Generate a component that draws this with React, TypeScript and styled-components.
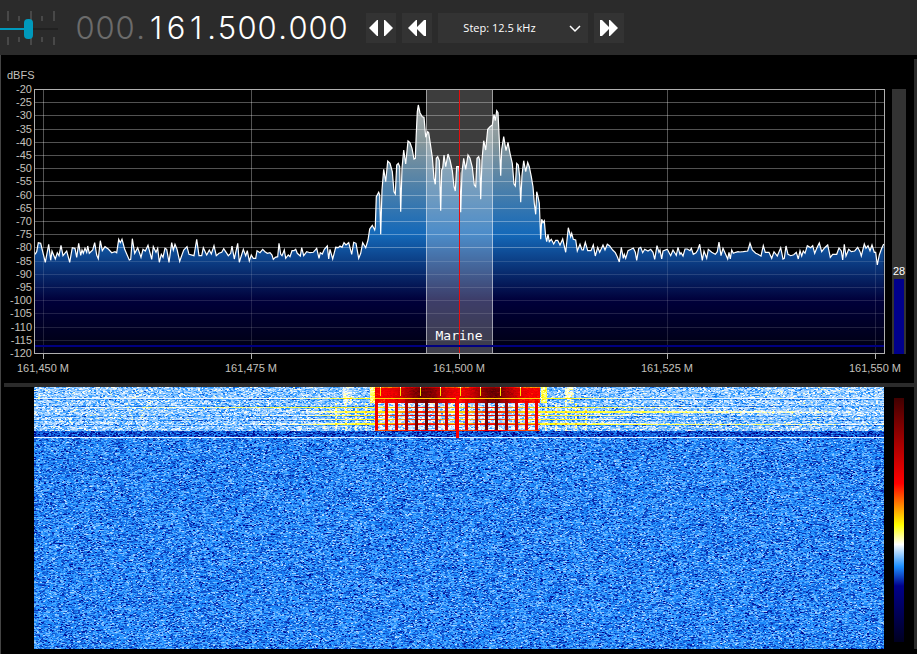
import React, { useLayoutEffect, useRef, useState } from 'react';
import styled, { createGlobalStyle } from 'styled-components';

const GlobalStyle = createGlobalStyle`
  * { box-sizing: border-box; }
  body { margin: 0; background: #000; font-family: "Liberation Sans", Arial, sans-serif; }
`;

const Page = styled.main`
  display: flex;
  flex-direction: column;
  background: #000;
`;

const Toolbar = styled.header`
  display: flex;
  align-items: center;
  height: 55px;
  background: #2b2b2b;
`;

const SliderBox = styled.label`
  display: grid;
  width: 58px;
  height: 55px;
  align-items: center;
  > * { grid-area: 1 / 1; }
`;

const VolumeSlider = styled.input`
  appearance: none;
  width: 58px;
  height: 20px;
  margin: 2px 0 0;
  background: transparent;
  &::-webkit-slider-runnable-track {
    height: 2px;
    background: linear-gradient(90deg, #0099bc 50%, #212121 50%);
  }
  &::-webkit-slider-thumb {
    appearance: none;
    width: 9px;
    height: 20px;
    margin-top: -9px;
    border-radius: 4px;
    background: #0099bc;
  }
`;

const Frequency = styled.output`
  display: flex;
  margin-left: 17px;
  color: #fff;
  font: 300 31px/55px Inter, "Open Sans", sans-serif;
`;

const Digit = styled.span<{ $dim?: boolean; $dot?: boolean }>`
  width: ${p => (p.$dot ? 11 : 20)}px;
  text-align: center;
  color: ${p => (p.$dim ? '#6b6b6b' : '#fff')};
`;

const Controls = styled.div`
  display: flex;
  gap: 6px;
  margin-left: 18px;
`;

const IconButton = styled.button`
  display: grid;
  place-items: center;
  width: 30px;
  height: 30px;
  padding: 0;
  border: 0;
  background: #333;
  svg { fill: #fff; }
`;

const SelectBox = styled.label`
  display: grid;
  grid-template-columns: 1fr 27px;
  align-items: center;
  width: 150px;
  height: 30px;
  background: #333;
  svg { grid-area: 1 / 2; pointer-events: none; }
`;

const StepSelect = styled.select`
  appearance: none;
  grid-area: 1 / 1 / 2 / 3;
  width: 100%;
  height: 30px;
  padding: 0 27px 0 0;
  border: 0;
  background: transparent;
  color: #fff;
  font: 11px "Open Sans", "Noto Sans", sans-serif;
  text-align: center;
  text-align-last: center;
`;

const Body = styled.section`
  display: flex;
  border-left: 1px solid #444;
  padding-bottom: 5px;
`;

const Content = styled.div`
  flex: 1;
  min-width: 0;
`;

const EdgeStrip = styled.div`
  width: 3px;
  margin-top: 4px;
  background: #2b2b2b;
`;

const Row = styled.div`
  display: flex;
  align-items: flex-start;
`;

const Spectrum = styled.svg`
  display: block;
  flex: 1;
  min-width: 0;
  overflow: visible;
  font-family: "Liberation Sans", Arial, sans-serif;
  font-size: 11px;
`;

const Level = styled.div`
  display: flex;
  flex-direction: column;
  align-items: center;
  justify-content: flex-end;
  width: 14px;
  height: 265px;
  margin: 34px 8px 0 7px;
  background: #333;
  color: #fff;
  font-size: 11px;
  line-height: 16px;
`;

const LevelFill = styled.div`
  width: 10px;
  height: 75px;
  background: #00008b;
`;

const Splitter = styled.div`
  height: 4px;
  margin-left: 3px;
  background: #2b2b2b;
`;

const Waterfall = styled.canvas`
  display: block;
  flex: 1;
  min-width: 0;
  height: 262px;
  margin-left: 33px;
`;

const ColorScale = styled.div`
  width: 10px;
  height: 244px;
  margin: 11px 10px 0;
  background: linear-gradient(#400000, #f00 35%, #ff0 52%, #fff 60%, #1e90ff 69%, #00008b 77%, #000020);
`;

// Trace segments: origin plus point offsets in thirds of a plot unit.
const SEGMENTS: [number, number, string][] = [
  [0, 60, '105,583 110,575 115,548 122,550 127,570 136,607 146,553 152,601 156,573 166,597 172,578 177,587 183,556 189,587 200,573 209,607 217,563 225,565 230,592 236,550 242,586 246,570 250,580 255,565 260,577 263,558 268,580 278,570 284,548 290,585 295,596 301,542 307,572 315,560 325,567 335,578 345,575 350,578 356,538 361,548 366,538 374,568 388,600 392,598 397,536 404,580 413,563 423,592 429,568 436,573 444,556 455,598 460,560 468,577 473,565 478,607 484,583 489,592 495,565 500,568 507,607 515,548 520,570 525,553 531,568 539,604 551,570 561,560 567,583 582,587 590,538 597,587 605,587 610,563 620,585 628,570 634,582 642,557 649,587 657,580 665,577 671,566 685,587 692,580 696,558 703,597 713,550 718,607 730,568'],
  [240, 230, '17,77 22,62 28,93 34,75 40,85 47,85 51,62 60,68 68,58 75,65 82,70 90,68 96,75 100,88 106,82 113,80 117,40 122,73 126,77 133,60 137,85 145,75 150,80 156,62 162,62 167,58 172,70 181,78 185,53 191,77 200,65 210,68 220,67 230,55 237,85 241,68 247,72 253,58 262,48 266,87 270,58 278,87 287,52 295,53'],
  [340, 80, '0,498 6,502 12,488 18,495 26,488 35,523 41,487 48,490 56,535 62,520 68,488 77,503 84,480 89,447 97,436 104,450 106,440 109,350 116,337 119,345 122,463 126,330 131,268 137,305 143,243 150,250 157,275 162,335 166,342 170,255 175,250 179,260 182,395 186,265 191,210 197,252 204,183 210,188 216,205 222,237 226,235 229,160 232,95 235,75 240,98 247,110 252,112 257,172 263,155 266,158 270,185 277,232 282,295 286,313 289,235 293,230 298,242 302,392 305,270 308,265 312,225 317,260 324,222 330,240 337,272 342,320 346,333 350,260 356,260 359,280 362,397 366,275 371,235 377,268 384,225 390,235 397,262 403,315 407,320 411,235 416,230 419,240 422,358 426,240 431,182 437,210 443,148 450,140 457,135 462,103 466,122 470,92 474,98 478,180 482,287 485,208 491,170 498,212 504,187 510,220 517,250 522,312 526,318 530,250 535,255 539,290 542,367 546,285 551,242 557,275 563,247 568,260 574,290 579,320 583,370 587,403 590,335 594,350 598,370 602,478 605,418 609,428 613,422 617,470 620,485 624,463 628,485 634,478 641,492 647,481 653,481'],
  [560, 220, '0,75 8,57 17,97 25,23 32,50 35,40 40,58 47,60 52,93 60,73 66,90 70,90 76,67 83,92 93,92 100,75 106,108 113,82 119,97 129,75 135,90 142,73 149,78 158,90 166,98 172,110 178,126 184,82 190,115 193,103 197,115 204,92 213,88 220,84 226,97 230,121 236,85 242,82 248,98 254,88 264,93 272,88 279,97 284,118 291,77 297,97 300,90 305,117 309,93 322,88 332,107 339,90 349,106 354,82 360,103 363,98 369,108 375,87 382,87 390,92 394,85 400,103 408,98 413,90 419,73 427,121 432,93 440,115 445,88 455,97 466,103 472,95 477,66 483,107 489,85 503,117 507,97 511,117 515,90 520,100 527,97 534,95'],
  [700, 220, '120,96 130,95 143,93 150,70 157,90 167,100 174,103 183,108 190,77 196,97 207,97 215,115 222,95 232,108 242,83 249,117 253,115 258,78 264,103 272,107 281,104 289,97 295,117 300,92 305,108 310,93 315,100 322,77 332,83 338,77 344,100 350,85 358,69 365,95 374,83 383,75 391,112 398,103 410,103 417,84 424,93 428,120 433,73 438,108 446,88 454,95 464,93 473,82 480,95 484,108 493,72 498,85 504,77 510,92 516,75 523,97 527,97 532,135 538,105 545,85 551,72'],
];

const TRACE = SEGMENTS.flatMap(([ox, oy, pts]) =>
  pts.split(' ').map(pt => {
    const [x, y] = pt.split(',').map(Number);
    return `${(ox + x / 3).toFixed(1)},${(oy + y / 3).toFixed(1)}`;
  }),
).join(' ');

const LEVELS = Array.from({ length: 21 }, (_, i) => -20 - i * 5);
const MARKS = ['161,450 M', '161,475 M', '161,500 M', '161,525 M', '161,550 M'];

function SpectrumChart() {
  return (
    <Spectrum viewBox="1 55 884 328" role="img" aria-label="Spectrum in dBFS">
      <defs>
        <linearGradient id="level" gradientUnits="userSpaceOnUse" x1="0" y1="89" x2="0" y2="353">
          <stop offset="0" stopColor="#b9b6b3" />
          <stop offset="0.2" stopColor="#85969a" />
          <stop offset="0.55" stopColor="#1469b9" />
          <stop offset="0.8" stopColor="#00003a" />
          <stop offset="1" stopColor="#000010" />
        </linearGradient>
      </defs>
      <polygon points={`34,353 ${TRACE} 884,353`} fill="url(#level)" />
      <rect x="426" y="90" width="67" height="263" fill="#fff" fillOpacity="0.24" />
      <g stroke="#fff" strokeOpacity="0.32" shapeRendering="crispEdges">
        {LEVELS.slice(1, 20).map((v, i) => {
          const y = Math.floor(89.5 + 13.2 * (i + 1)) + 0.5;
          return <line key={v} x1="35" x2="884" y1={y} y2={y} strokeOpacity={y > 260 ? 0.13 : 0.32} />;
        })}
        {MARKS.map((m, i) => (
          <React.Fragment key={m}>
            <line x1={43.5 + i * 208} x2={43.5 + i * 208} y1="90" y2="248" />
            <line x1={43.5 + i * 208} x2={43.5 + i * 208} y1="248" y2="353" strokeOpacity="0.13" />
          </React.Fragment>
        ))}
        <path d="M426.5 90V353M492.5 90V353" strokeOpacity="0.5" />
      </g>
      <polyline points={TRACE} fill="none" stroke="#fff" strokeWidth="1.2" />
      <text x="459" y="340" fill="#fff" textAnchor="middle" fontSize="13" fontFamily='"DejaVu Sans Mono", monospace'>Marine</text>
      <g shapeRendering="crispEdges">
        <rect x="459" y="90" width="1" height="263" fill="#e60c0c" />
        <rect x="35" y="345" width="849" height="2" fill="#000080" />
        <rect x="34.5" y="89.5" width="850" height="264" fill="none" stroke="#b0b0b0" />
        {MARKS.map((m, i) => <rect key={m} x={43 + i * 208} y="354" width="1" height="5" fill="#b0b0b0" />)}
      </g>
      <g fill="#c3c0bd">
        <text x="7" y="79">dBFS</text>
        {LEVELS.map((v, i) => <text key={v} x="32" y={Math.round(93 + i * 13.2)} textAnchor="end">{v}</text>)}
        {MARKS.map((m, i) => <text key={m} x={43 + i * 208} y="372" textAnchor="middle">{m}</text>)}
      </g>
    </Spectrum>
  );
}

const PALETTE: [number, number, number, number][] = [
  [0, 0, 0, 32], [0.23, 0, 0, 139], [0.31, 30, 144, 255], [0.4, 255, 255, 255],
  [0.48, 255, 255, 0], [0.65, 255, 0, 0], [1, 64, 0, 0],
];

function paletteColor(value: number) {
  const v = Math.max(0, Math.min(1, value));
  let i = 1;
  while (i < PALETTE.length - 1 && PALETTE[i][0] < v) i++;
  const a = PALETTE[i - 1];
  const b = PALETTE[i];
  const t = (v - a[0]) / (b[0] - a[0]);
  return [1, 2, 3].map(k => a[k] + (b[k] - a[k]) * t);
}

function drawWaterfall(ctx: CanvasRenderingContext2D) {
  const width = 850;
  const height = 262;
  const image = ctx.createImageData(width, height);
  let seed = 7411;
  const random = () => {
    seed = (Math.imul(seed, 1664525) + 1013904223) >>> 0;
    return seed / 4294967296;
  };
  // Rows in which the keyed signal splatters over the band: row -> [left reach, right reach].
  const splatter: Record<number, [number, number]> = {
    11: [90, 90], 20: [250, 160], 24: [70, 230], 25: [60, 260], 28: [90, 90], 32: [70, 70], 36: [60, 90], 37: [110, 330],
  };
  const quiet = [12, 19, 29, 33, 38];
  for (let y = 0; y < height; y++) {
    let held = 0;
    let run = 0;
    for (let x = 0; x < width; x++) {
      if (run <= 0) {
        held = (random() + random() + random() - 1.5) / 1.5;
        if (held < 0) held *= 1.25;
        run = random() < 0.65 ? 2 : 1;
      }
      run--;
      const side = x < 424 ? 0 : 1;
      const d = Math.abs(x - 424);
      const out = Math.max(0, d - 82);
      const inBand = x >= 341 && x <= 505;
      const peak = Math.exp(-(((d - 35) / 20) ** 2));
      const phase = (x - 341 + 1000) % 10;
      let v = 0.308 + held * 0.076;
      if (y < 44) {
        v = 0.354 + held * 0.075 + (d > 300 ? 0.006 : 0);
        if (quiet.includes(y)) v -= 0.035;
        const line = splatter[y];
        if (line) {
          const strength = Math.exp(-((out / line[side]) ** 2));
          v = v * (1 - strength) + (0.47 + held * 0.02) * strength;
        }
        if (y === 11) v = Math.max(v, 0.39);
        if (y < 16 && out > 0 && out < 7) v = 0.45 + held * 0.07;
        else if (y < 16 && out > 24 && out < 34) v += 0.045;
        if (y > 15 && out > 0 && out < 50 && phase < 2) v += 0.05;
        if (inBand && y < 16) {
          v = 0.67 + peak * 0.25 + held * 0.05;
          if (y < 9 && x % 20 === 6) v = 0.5;
          if (y > 11 && phase > 3) v -= 0.04;
          if (y === 11) v = 0.51;
          if (y === 0) v -= 0.1;
        } else if (inBand) {
          v = 0.375 + held * 0.07;
          if (line) v = y === 28 || y === 37 ? 0.6 + peak * 0.08 : 0.5 + peak * 0.13;
          if (phase < 3) v = 0.68 + peak * 0.25 + held * 0.03;
          if (y === 43) v = 0.6 + peak * 0.06;
        }
      } else if (y < 50) {
        v -= 0.03;
      } else if (y === 50) {
        v = 0.39 + held * 0.01;
      }
      if (x >= 422 && x <= 424 && y > 8 && y < 51) v = 0.65;
      const color = paletteColor(v);
      const at = (y * width + x) * 4;
      image.data[at] = color[0];
      image.data[at + 1] = color[1];
      image.data[at + 2] = color[2];
      image.data[at + 3] = 255;
    }
  }
  ctx.putImageData(image, 0, 0);
}

export default function App() {
  const canvas = useRef<HTMLCanvasElement>(null);
  const [volume, setVolume] = useState(49);
  useLayoutEffect(() => {
    const ctx = canvas.current?.getContext('2d');
    if (ctx) drawWaterfall(ctx);
  }, []);
  return (
    <>
      <GlobalStyle />
      <Page>
        <Toolbar>
          <SliderBox>
            <svg width="58" height="55" aria-hidden="true" shapeRendering="crispEdges">
              <g fill="#484848">
                {[7, 30, 53].map(x => <path key={x} d={`M${x} 11h2v10h-2zM${x} 37h2v8h-2z`} />)}
                {[18, 41].map(x => <path key={x} d={`M${x} 16h2v5h-2zM${x} 37h2v5h-2z`} />)}
              </g>
            </svg>
            <VolumeSlider type="range" aria-label="Volume" value={volume} onChange={e => setVolume(Number(e.target.value))} />
          </SliderBox>
          <Frequency aria-label="Frequency">
            {'000.161.500.000'.split('').map((c, i) => (
              <Digit key={i} $dim={i < 4} $dot={c === '.'}>{c}</Digit>
            ))}
          </Frequency>
          <Controls>
            <IconButton type="button" aria-label="Center">
              <svg width="26" height="18"><path d="M1 9L9 1h1v16H9zM25 9L17 1h-1v16h1z" /></svg>
            </IconButton>
            <IconButton type="button" aria-label="Step down">
              <svg width="20" height="18"><path d="M1 9L9 1h1v7l7-7h2v16h-2l-7-7v7H9z" /></svg>
            </IconButton>
            <SelectBox>
              <StepSelect aria-label="Step" defaultValue="12.5">
                <option value="12.5">Step: 12.5 kHz</option>
                <option value="25">Step: 25 kHz</option>
              </StepSelect>
              <svg width="27" height="12" fill="none" stroke="#fff" strokeWidth="1.5"><path d="M9 4l5 5 5-5" /></svg>
            </SelectBox>
            <IconButton type="button" aria-label="Step up">
              <svg width="20" height="18"><path d="M19 9l-8-8h-1v7L3 1H1v16h2l7-7v7h1z" /></svg>
            </IconButton>
          </Controls>
        </Toolbar>
        <Body>
          <Content>
            <Row>
              <SpectrumChart />
              <Level role="meter" aria-label="Signal level" aria-valuenow={28} aria-valuemin={0} aria-valuemax={100}>
                28
                <LevelFill />
              </Level>
            </Row>
            <Splitter />
            <Row>
              <Waterfall ref={canvas} width={850} height={262} />
              <ColorScale />
            </Row>
          </Content>
          <EdgeStrip />
        </Body>
      </Page>
    </>
  );
}
